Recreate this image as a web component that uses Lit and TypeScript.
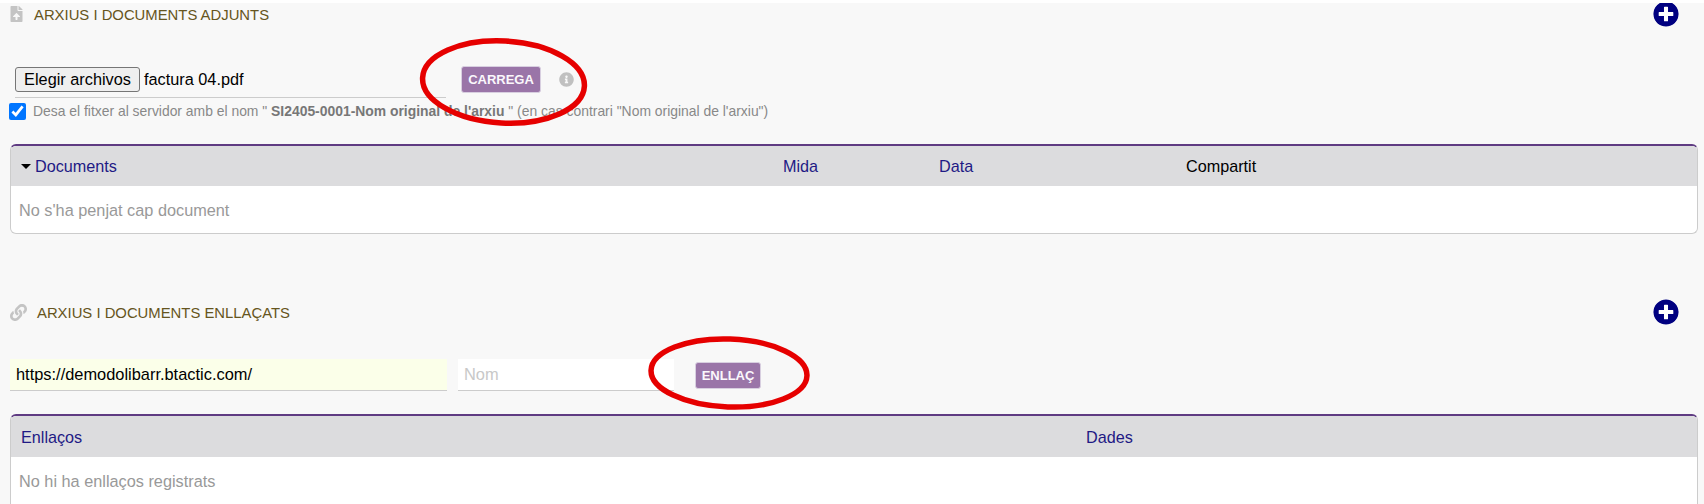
import { LitElement, html, css, svg } from "lit";
import { customElement } from "lit/decorators.js";

const PLUS = "M256 8C119 8 8 119 8 256s111 248 248 248 248-111 248-248S393 8 256 8zm144 276c0 6.6-5.4 12-12 12h-92v92c0 6.6-5.4 12-12 12h-56c-6.6 0-12-5.4-12-12v-92h-92c-6.6 0-12-5.4-12-12v-56c0-6.6 5.4-12 12-12h92v-92c0-6.6 5.4-12 12-12h56c6.6 0 12 5.4 12 12v92h92c6.6 0 12 5.4 12 12v56z";
const INFO = "M256 8C119.043 8 8 119.083 8 256c0 136.997 111.043 248 248 248s248-111.003 248-248C504 119.083 392.957 8 256 8zm0 110c23.196 0 42 18.804 42 42s-18.804 42-42 42-42-18.804-42-42 18.804-42 42-42zm56 254c0 6.627-5.373 12-12 12h-88c-6.627 0-12-5.373-12-12v-24c0-6.627 5.373-12 12-12h12v-64h-12c-6.627 0-12-5.373-12-12v-24c0-6.627 5.373-12 12-12h64c6.627 0 12 5.373 12 12v100h12c6.627 0 12 5.373 12 12v24z";
const FILE = "M224 136V0H24C10.7 0 0 10.7 0 24v464c0 13.3 10.7 24 24 24h336c13.3 0 24-10.7 24-24V160H248c-13.2 0-24-10.8-24-24zm65.18 216.01H224v80c0 8.84-7.16 16-16 16h-32c-8.84 0-16-7.16-16-16v-80H94.82c-14.28 0-21.41-17.29-11.27-27.36l96.42-95.7c6.65-6.61 17.39-6.61 24.04 0l96.42 95.7c10.15 10.07 3.03 27.36-11.25 27.36zM377 105L279.1 7c-4.5-4.5-10.6-7-17-7H256v128h128v-6.1c0-6.3-2.5-12.4-7-16.9z";
const LINK = "M326.612 185.391c59.747 59.809 58.927 155.698.36 214.59-.11.12-.24.25-.36.37l-67.2 67.2c-59.27 59.27-155.699 59.262-214.96 0-59.27-59.26-59.27-155.7 0-214.96l37.106-37.106c9.84-9.84 26.786-3.3 27.294 10.606.648 17.722 3.826 35.527 9.69 52.721 1.986 5.822.567 12.262-3.783 16.612l-13.087 13.087c-28.026 28.026-28.905 73.66-1.155 101.96 28.024 28.579 74.086 28.749 102.325.51l67.2-67.19c28.191-28.191 28.073-73.757 0-101.83-3.701-3.694-7.429-6.564-10.341-8.569a16.037 16.037 0 0 1-6.947-12.606c-.396-10.567 3.348-21.456 11.698-29.806l21.054-21.055c5.521-5.521 14.182-6.199 20.584-1.731a152.482 152.482 0 0 1 20.522 17.197zM467.547 44.449c-59.261-59.262-155.69-59.27-214.96 0l-67.2 67.2c-.12.12-.25.25-.36.37-58.566 58.892-59.387 154.781.36 214.59a152.454 152.454 0 0 0 20.521 17.196c6.402 4.468 15.064 3.789 20.584-1.731l21.054-21.055c8.35-8.35 12.094-19.239 11.698-29.806a16.037 16.037 0 0 0-6.947-12.606c-2.912-2.005-6.64-4.875-10.341-8.569-28.073-28.073-28.191-73.639 0-101.83l67.2-67.19c28.239-28.239 74.3-28.069 102.325.51 27.75 28.3 26.872 73.934-1.155 101.96l-13.087 13.087c-4.35 4.35-5.769 10.79-3.783 16.612 5.864 17.194 9.042 34.999 9.69 52.721.509 13.906 17.454 20.446 27.294 10.606l37.106-37.106c59.271-59.259 59.271-155.699.001-214.959z";

const icon = (d: string, cls: string, vb = "0 0 512 512") =>
  html`<svg class=${cls} viewBox=${vb} aria-hidden="true"><path fill="currentColor" d=${d}></path></svg>`;

@customElement("app-root")
export class AppRoot extends LitElement {
  static styles = css`
    :host {
      display: block;
      position: relative;
      width: 1704px;
      height: 504px;
      overflow: hidden;
      box-sizing: border-box;
      border-top: 3px solid #fff;
      background: #f8f8f8;
      font-family: "Liberation Sans", Arial, sans-serif;
      font-size: 15.5px;
      color: #444;
    }
    .title {
      display: flex;
      align-items: center;
      height: 22px;
      color: #665520;
      font-size: 14.85px;
    }
    .title span { position: relative; top: 1px; }
    .title-1 { padding: 0 25px 0 10px; }
    .title-2 { padding: 0 25px 0 10px; margin-top: 65px; height: 26px; }
    .ic-file { width: 13px; height: 16px; color: #c4c4c4; margin-right: 11px; }
    .ic-link { width: 17px; height: 17px; color: #c4c4c4; margin-right: 10px; }
    .ic-plus { width: 26px; height: 26px; color: #000080; margin-left: auto; background: radial-gradient(circle, #fff 50%, transparent 52%); border-radius: 50%; }
    .upload {
      display: flex;
      align-items: center;
      margin-top: 38px;
      padding-left: 15px;
      height: 34px;
    }
    .file-wrap {
      display: flex;
      align-items: center;
      gap: 4px;
      width: 431px;
      height: 36px;
      border-bottom: 1px solid #ccc;
      box-sizing: border-box;
      color: #000;
      font-size: 16.3px;
    }
    .file-btn {
      width: 125px;
      height: 25px;
      padding: 0;
      font: inherit;
      color: #000;
      background: #efefef;
      border: 1px solid #767676;
      border-radius: 3px;
    }
    .btn {
      display: inline-flex;
      align-items: center;
      justify-content: center;
      padding: 0;
      border: 1px solid #d8cfe0;
      border-radius: 3px;
      background: #9a75a8;
      color: #fbf8fc;
      font: bold 13px "Liberation Sans", Arial, sans-serif;
      height: 27px;
    }
    .btn-load { width: 80px; margin-left: 15px; margin-bottom: 2px; }
    .ic-info { width: 15px; height: 15px; color: #c0c0c0; margin-left: 18px; margin-bottom: 2px; }
    .check {
      display: flex;
      align-items: center;
      gap: 7px;
      margin-top: 3px;
      padding-left: 9px;
      height: 22px;
      color: #888;
      font-size: 13.9px;
    }
    .check input { width: 17px; height: 17px; margin: 0; accent-color: #0075ff; }
    .check b { color: #777; }
    .table {
      margin: 22px 6px 0 10px;
      background: #fff;
      border: 1px solid #ccc;
      border-top: 2px solid #5f3b82;
      border-radius: 6px;
      overflow: hidden;
    }
    .table.first { height: 90px; box-sizing: border-box; }
    .table.second { margin-top: 23px; height: 120px; box-sizing: border-box; }
    .head {
      display: grid;
      align-items: center;
      height: 40px;
      padding-top: 1px;
      box-sizing: border-box;
      background: #dcdcde;
      color: #1f1a85;
      font-size: 16.2px;
    }
    .first .head { grid-template-columns: 772px 156px 247px 1fr; }
    .second .head { grid-template-columns: 1075px 1fr; height: 41px; padding-left: 0; }
    .head span:first-child { padding-left: 10px; display: flex; align-items: center; }
    .caret {
      width: 0;
      height: 0;
      border-left: 5px solid transparent;
      border-right: 5px solid transparent;
      border-top: 5px solid #000;
      margin-right: 4px;
    }
    .plain { color: #000; }
    .empty {
      padding: 15px 8px 0;
      color: #999;
      font-size: 16.3px;
    }
    .row {
      display: flex;
      align-items: stretch;
      gap: 11px;
      margin-top: 34px;
      padding-left: 10px;
    }
    .field {
      height: 32px;
      box-sizing: border-box;
      padding: 0 6px;
      border: 0;
      border-bottom: 1px solid #ccc;
      font: 16.4px "Liberation Sans", Arial, sans-serif;
      color: #000;
      outline: none;
    }
    .url { width: 437px; background: #fbffe9; }
    .name { width: 216px; background: #fff; margin-right: 10px; }
    .name::placeholder { color: #c8c8c8; }
    .row .btn { width: 66px; align-self: center; margin-left: 0; }
    .ink { position: absolute; left: 0; top: -3px; width: 1704px; height: 504px; pointer-events: none; }
  `;

  render() {
    return html`
      <div class="title title-1">
        ${icon(FILE, "ic-file", "0 0 384 512")}
        <span>ARXIUS I DOCUMENTS ADJUNTS</span>
        ${icon(PLUS, "ic-plus")}
      </div>
      <div class="upload">
        <div class="file-wrap">
          <button class="file-btn">Elegir archivos</button>
          <span>factura 04.pdf</span>
        </div>
        <button class="btn btn-load">CARREGA</button>
        ${icon(INFO, "ic-info")}
      </div>
      <label class="check">
        <input type="checkbox" checked />
        <span>Desa el fitxer al servidor amb el nom " <b>SI2405-0001-Nom original de l'arxiu</b> " (en cas contrari "Nom original de l'arxiu")</span>
      </label>
      <div class="table first">
        <div class="head">
          <span><i class="caret"></i>Documents</span><span>Mida</span><span>Data</span><span class="plain">Compartit</span>
        </div>
        <div class="empty">No s'ha penjat cap document</div>
      </div>
      <div class="title title-2">
        ${icon(LINK, "ic-link")}
        <span>ARXIUS I DOCUMENTS ENLLAÇATS</span>
        ${icon(PLUS, "ic-plus")}
      </div>
      <div class="row">
        <input class="field url" value="https://demodolibarr.btactic.com/" />
        <input class="field name" placeholder="Nom" />
        <button class="btn">ENLLAÇ</button>
      </div>
      <div class="table second">
        <div class="head"><span>Enllaços</span><span>Dades</span></div>
        <div class="empty">No hi ha enllaços registrats</div>
      </div>
      <svg class="ink" viewBox="0 0 1704 504" aria-hidden="true">
        ${svg`<ellipse cx="503.5" cy="82" rx="81" ry="41" transform="rotate(3 503.5 82)" fill="none" stroke="#e60000" stroke-width="5.5"></ellipse>
        <ellipse cx="729" cy="373" rx="78" ry="34" transform="rotate(2 729 373)" fill="none" stroke="#e60000" stroke-width="5.5"></ellipse>`}
      </svg>
    `;
  }
}
